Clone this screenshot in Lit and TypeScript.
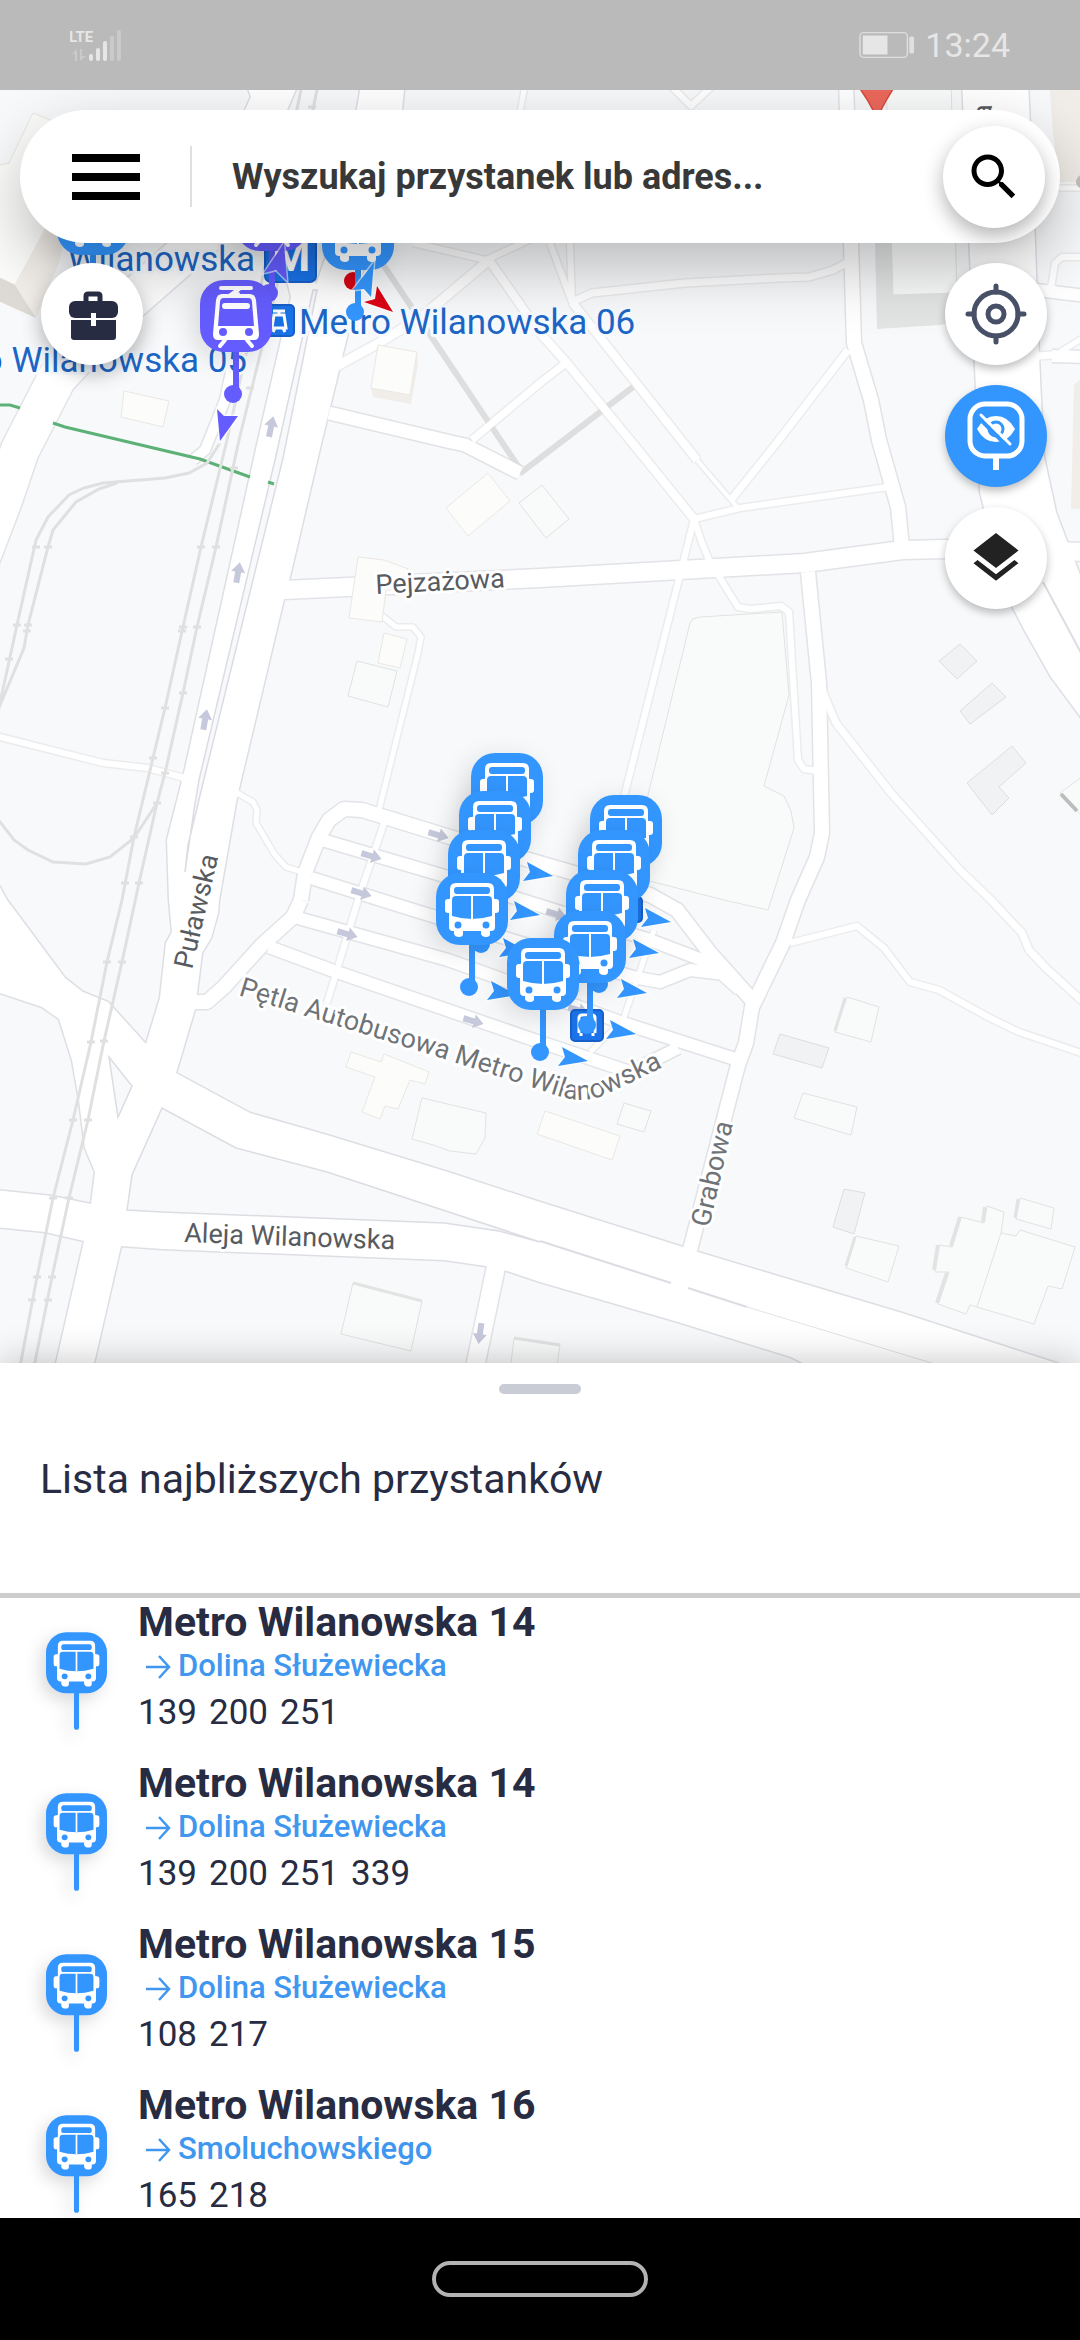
import { LitElement, html, svg, css } from "lit";
import { customElement, property } from "lit/decorators.js";

type Road = [string, number];
type Stop = { name: string; direction: string; lines: string[] };

const STOPS: Stop[] = [
  { name: "Metro Wilanowska 14", direction: "Dolina Służewiecka", lines: ["139", "200", "251"] },
  { name: "Metro Wilanowska 14", direction: "Dolina Służewiecka", lines: ["139", "200", "251", "339"] },
  { name: "Metro Wilanowska 15", direction: "Dolina Służewiecka", lines: ["108", "217"] },
  { name: "Metro Wilanowska 16", direction: "Smoluchowskiego", lines: ["165", "218"] },
];

// Wide streets with uneven edges, drawn as closed outlines.
const STREET_AREAS: string[] = [
  // Puławska with the junction and the diagonal avenue
  "M245,80 L251,97 245,110 270,180 286,277 291,297 258,440 184,773 167,840 169,900 172,932 166,943 160,998 146,1044 108,1002 83,992 65,978 7,900 -4,880 -4,991 0,993 42,1007 59,1019 72,1060 79,1100 85,1148 95,1172 91,1204 52,1196 -4,1190 -4,1227 45,1232 84,1241 54,1372 92,1372 121,1246 162,1249 444,1260 486,1266 504,1270 540,1282 678,1322 791,1357 820,1372 1082,1372 1053,1362 902,1313 698,1252 683,1247 540,1202 448,1172 327,1135 250,1113 176,1073 195,1009 197,993 202,953 211,938 218,913 219,900 237,797 284,599 289,581 322,440 339,370 402,110 405,80 362,80 335,230 316,285 300,200 287,110 300,80Z",
  // street along the east side
  "M962,80 L975,367 980,492 984,508 1000,580 1013,608 1026,633 1051,677 1086,724 1086,590 1068,544 1056,512 1044,457 1041,400 1038,333 1035,243 1028,80Z",
];

const ISLANDS: string[] = [
  "M109,1057 L132,1086 118,1117Z",
  "M127,1210 L132,1175 162,1108 236,1148 327,1172 540,1242 499,1231 444,1223 162,1212Z",
  "M275,460 L199,780 194,810 185,872 188,845 203,783 283,458 317,290 313,290Z",
];

const ROADS: Road[] = [
  ["M-20,560 L3,500 20,450 57,378 120,310 200,240 260,180", 38],
  ["M240,330 L225,400 205,450 193,460", 10],
  ["M283,590 L540,578 805,563 902,550 946,549 1090,552", 18],
  ["M846,80 L851,243 854,343 871,400 879,440 898,507 902,547", 14],
  ["M808,572 L819,683 822,833 817,857 798,900 783,943 752,1007 746,1043 738,1065 690,1250", 14],
  ["M329,413 L451,442 465,445 520,473", 13],
  ["M496,1267 L474,1372", 18],
  ["M1036,290 L1086,296", 12],
  ["M1051,288 L1055,263 1062,257 1086,257", 6],
  ["M1036,356 L1052,355", 7],
  ["M1052,356 L1086,357", 12],
  ["M1060,352 L1086,336", 5],
  ["M1056,188 L1086,188", 5],
  ["M671,86 L691,106 712,86", 6],
  ["M526,80 L520,112", 5],
  ["M550,243 L572,302 570,243", 6],
  ["M572,302 L592,293 685,283 778,278 809,277 833,270 848,262", 7],
  ["M572,302 L697,460", 8],
  ["M697,460 L731,500 740,510", 4],
  ["M413,243 L486,260 540,235", 6],
  ["M489,260 L540,333 566,362 630,440 694,519", 8],
  ["M489,260 L424,315 379,343 337,366", 9],
  ["M566,363 L540,383 472,440", 7],
  ["M848,350 L779,440 731,500", 7],
  ["M694,519 L740,508 888,487", 6],
  ["M694,519 L683,563 622,805 610,860", 6],
  ["M694,519 L702,543 710,562 738,607 750,609 781,606 789,612 798,760 804,769 817,771", 6],
  ["M822,690 L836,723 891,793 960,870 991,900 1022,933 1029,950 1046,968 1090,1008", 7],
  ["M790,943 L857,926 884,948 910,982 939,990 988,1017 1019,1032 1090,1056", 6],
  ["M362,600 L396,627 413,627 421,637 418,653 379,810", 5],
  ["M384,823 L358,900 327,1003", 6],
  ["M-4,736 L103,763 148,768 184,778", 6],
  ["M237,793 L253,802 257,810 256,823 275,855 286,867 305,873", 5],
  ["M654,930 L623,1020 590,1052", 5],
  ["M301,900 L305,873 319,837 329,820 344,809 362,810 453,838 650,895 677,910 690,927 710,953 752,1000", 14],
  ["M322,840 L448,877 650,940 710,963 740,990", 12],
  ["M311,878 L413,910 633,977 660,982 690,970 725,974", 12],
  ["M298,918 L448,960 560,1000 620,1022 738,1060", 12],
  ["M269,947 L331,970 540,1042 630,1072 678,1048", 12],
  ["M301,900 L293,917 262,945 224,987 207,1002 190,1002", 14],
];

const RAILS: string[] = [
  "M303,80 L260,290 227,440 201,547 183,627 165,708 153,758 134,837 122,900 107,962 91,1042 73,1120 53,1198 37,1277 19,1372",
  "M319,80 L276,290 239,440 216,547 197,627 183,693 165,773 157,803 139,883 122,962 104,1041 88,1120 69,1198 52,1277 33,1372",
  "M220,443 L207,463 189,473 165,478 103,483 84,488 69,495 48,517 36,540 17,625 -2,712",
  "M117,483 L99,489 76,502 53,530 48,547 28,625 24,648 -2,710",
  "M-3,818 L14,840 28,850 53,862 86,864 110,857 134,838 157,803",
];

const RAIL_TICKS: number[][] = [
  [201, 547], [216, 547], [183, 627], [182, 631], [197, 627], [165, 708], [183, 693], [153, 758], [165, 773],
  [134, 837], [157, 803], [125, 883], [139, 883], [107, 962], [122, 962], [91, 1042], [104, 1041], [73, 1120],
  [88, 1120], [53, 1198], [69, 1198], [37, 1277], [52, 1277], [32, 1300], [48, 1300], [36, 547], [48, 547],
  [17, 625], [28, 625], [27, 631], [9, 659], [312, 107], [250, 388], [234, 468],
];

// [outline, tone]
const BUILDINGS: [string, string][] = [
  ["M-4,166 L9,163 33,113 95,138 41,237 15,285 -4,276Z", "cream"],
  ["M41,237 L70,200 60,260 36,318 15,285Z", "face"],
  ["M-4,276 L15,285 36,318 -4,300Z", "side"],
  ["M371,388 L410,395 417,352 418,364 411,404 373,397Z", "face"],
  ["M378,345 L417,352 410,395 371,388Z", "cream"],
  ["M124,391 L169,401 163,427 121,417Z", "cream"],
  ["M488,473 L510,501 468,536 446,508Z", "cream"],
  ["M519,503 L542,485 569,519 546,538Z", "mint"],
  ["M358,557 L384,560 408,569 404,590 386,590 382,622 349,618Z", "cream"],
  ["M384,633 L407,639 400,668 378,663Z", "cream"],
  ["M357,661 L397,671 388,707 348,696Z", "mint"],
  ["M700,617 L782,612 789,695 764,786 784,796 791,811 794,828 768,910 724,900 630,876 648,795 690,623 693,619Z", "mint"],
  ["M960,644 L977,661 957,679 939,661Z", "gray"],
  ["M992,683 L1006,697 970,724 960,711Z", "gray"],
  ["M1012,746 L1026,763 999,787 1009,798 992,815 967,783Z", "gray"],
  ["M1060,793 L1086,774 1086,820Z", "mint"],
  ["M351,1052 L381,1062 384,1054 429,1072 425,1084 410,1080 398,1109 385,1106 380,1119 362,1112 375,1077 346,1067Z", "cream"],
  ["M422,1098 L486,1113 485,1138 476,1154 450,1151 433,1145 412,1139Z", "mint"],
  ["M353,1283 L422,1301 411,1351 341,1334Z", "mint"],
  ["M514,1338 L560,1345 556,1372 510,1372Z", "mint"],
  ["M545,1111 L620,1136 612,1160 537,1134Z", "cream"],
  ["M624,1103 L651,1111 644,1132 617,1124Z", "mint"],
  ["M847,997 L879,1007 871,1042 835,1032Z", "mint"],
  ["M780,1034 L829,1048 822,1068 773,1054Z", "gray"],
  ["M803,1093 L857,1107 851,1135 794,1118Z", "mint"],
  ["M844,1189 L865,1193 854,1234 833,1227Z", "gray"],
  ["M856,1236 L899,1246 888,1282 846,1268Z", "mint"],
  ["M1020,1198 L1054,1208 1051,1229 1016,1219Z", "mint"],
  ["M987,1206 L1004,1212 1001,1233 1016,1236 1020,1230 1075,1247 1062,1289 1048,1286 1034,1324 970,1305 966,1314 938,1304 949,1272 935,1272 939,1245 952,1247 961,1217 984,1223Z", "mint"],
  ["M1001,1233 L977,1307", "mint"],
  ["M1049,80 L1086,80 1086,182 1059,182 1053,133Z", "face"],
  ["M1086,374 L1074,385 1071,509 1086,509Z", "face"],
  ["M874,200 L891,200 893,295 950,293 950,322 941,325 877,329Z", "shade"],
  ["M886,80 L951,80 957,293 893,295Z", "mint"],
];

const WALLS: Road[] = [
  ["M353,1283 L422,1301", 3],
  ["M514,1338 L560,1345", 3],
  ["M845,998 L835,1031", 3],
  ["M855,1237 L846,1266", 3],
  ["M1018,1199 L1015,1218", 3],
  ["M985,1207 L983,1222", 4],
  ["M960,1217 L951,1246", 4],
  ["M938,1245 L934,1270", 4],
  ["M947,1273 L937,1303", 4],
];

// x, y, rotation
const FLOW_ARROWS: number[][] = [
  [271, 427, -78], [238, 573, -80], [205, 720, -80], [438, 835, 16], [371, 856, 16], [361, 893, 16],
  [347, 934, 16], [473, 1021, 16], [556, 914, 16], [578, 1010, 16], [480, 1333, 98],
];

const BUS_MARKERS: number[][] = [
  [471, 753], [459, 791], [448, 830], [436, 873], [590, 795], [578, 830], [566, 870], [554, 911], [507, 938],
];

const HEADINGS: number[][] = [
  [553, 876], [540, 915], [529, 952], [517, 995], [588, 1061], [671, 922], [659, 953], [647, 993], [636, 1034],
];

const busGlyph = svg`
  <rect x="0" y="0" width="72" height="72" rx="24" fill="#3396ff"></rect>
  <rect x="9" y="26" width="54" height="14" rx="3" fill="#fff"></rect>
  <path d="M20,10 H52 Q58,10 58,16 V25 L59,28 V54 Q59,58 55,58 H54 V61 Q54,64 50,64 T45,61 V58 H27 V61 Q27,64 23,64 T18,61 V58 H17 Q13,58 13,54 V28 L14,25 V16 Q14,10 20,10Z" fill="#fff"></path>
  <rect x="18" y="14" width="36" height="7" rx="3" fill="#3396ff"></rect>
  <path d="M20,23 H52 Q56,23 56,27 V43 Q46,46 36,46 T16,43 V27 Q16,23 20,23Z" fill="#3396ff"></path>
  <path d="M36,22 V46" stroke="#fff" stroke-width="2"></path>
  <circle cx="22" cy="52" r="3.5" fill="#3396ff"></circle>
  <circle cx="50" cy="52" r="3.5" fill="#3396ff"></circle>`;

const tramGlyph = svg`
  <rect x="0" y="0" width="72" height="72" rx="24" fill="#655cff"></rect>
  <path d="M21,8 H51 M39,9 L32,14 H38" fill="none" stroke="#fff" stroke-width="4" stroke-linecap="round"></path>
  <path d="M22,14 H50 Q55,14 56,20 L59,54 Q59,60 54,60 H18 Q13,60 13,54 L16,20 Q17,14 22,14Z" fill="#fff"></path>
  <path d="M24,18 H48 Q52,18 52,22 L54,46 H18 L20,22 Q20,18 24,18Z" fill="#655cff"></path>
  <rect x="22" y="23" width="28" height="6" rx="3" fill="#fff"></rect>
  <circle cx="23" cy="52" r="4" fill="#655cff"></circle>
  <circle cx="49" cy="52" r="4" fill="#655cff"></circle>
  <path d="M25,60 L20,66 M47,60 L52,66" stroke="#fff" stroke-width="4" stroke-linecap="round"></path>`;

const mapMarker = (x: number, y: number, tram = false) => svg`
  <g class="marker" transform="translate(${x} ${y})">
    <path d="M36,70 V112" stroke=${tram ? "#655cff" : "#3396ff"} stroke-width="6"></path>
    <circle cx="33" cy="114" r="9" fill=${tram ? "#655cff" : "#3396ff"}></circle>
    <g class="sign">${tram ? tramGlyph : busGlyph}</g>
  </g>`;

@customElement("stop-map")
export class StopMap extends LitElement {
  static styles = css`
    :host {
      display: block;
      background: #f7f9fb;
    }
    .canvas {
      display: block;
      width: 100%;
      height: 100%;
    }
    .casing {
      fill: none;
      stroke: #e2e3e7;
      stroke-linejoin: round;
    }
    .casing-light {
      fill: none;
      stroke: #ebecee;
      stroke-linejoin: round;
    }
    .surface {
      fill: none;
      stroke: #fff;
      stroke-linejoin: round;
    }
    .area {
      fill: #fff;
      stroke: #dedfe4;
      stroke-width: 3;
    }
    .area-fill {
      fill: #fff;
    }
    .island {
      fill: #f7f9fb;
      stroke: #dcdde3;
      stroke-width: 1.5;
    }
    .median {
      fill: none;
      stroke: #dcdde3;
      stroke-width: 2;
    }
    .rail {
      fill: none;
      stroke: #e0e0e1;
      stroke-width: 3;
    }
    .lane {
      fill: none;
      stroke: #dedede;
      stroke-width: 6;
    }
    .green {
      fill: none;
      stroke: #5db176;
      stroke-width: 3;
    }
    .cream {
      fill: #fcfcfa;
      stroke: #ebe8e3;
    }
    .mint {
      fill: #f9fbfa;
      stroke: #e0e3e1;
    }
    .gray {
      fill: #f1f2f4;
      stroke: #dddee0;
    }
    .face {
      fill: #f1ede9;
    }
    .side {
      fill: #dedad6;
    }
    .shade {
      fill: #e3e5e4;
    }
    .wall {
      fill: none;
      stroke: #e2e3e2;
    }
    .flow {
      fill: #c6c9db;
    }
    .label {
      font-family: Roboto, "Noto Sans", sans-serif;
      font-size: 27px;
      fill: #575b60;
      stroke: #fff;
      stroke-width: 6;
      stroke-linejoin: round;
      paint-order: stroke;
    }
    .minor {
      fill: #6f7377;
    }
    .transit {
      font-size: 35px;
      fill: #1d66c6;
      stroke: #f7fbff;
    }
    .badge {
      fill: #1a73e8;
      stroke: #175fc9;
      stroke-width: 2;
    }
    .badge-letter {
      font-family: Roboto, sans-serif;
      font-size: 44px;
      font-weight: 700;
      fill: #fff;
    }
    .heading {
      stroke: rgba(255, 255, 255, 0.6);
      stroke-width: 3;
      paint-order: stroke;
    }
    .blue {
      fill: #3396ff;
    }
    .purple {
      fill: #655cff;
    }
    .red {
      fill: #dc0414;
    }
    .sign {
      filter: drop-shadow(-6px 6px 12px rgba(0, 0, 0, 0.12));
    }
  `;

  render() {
    return html`
      <svg class="canvas" viewBox="0 90 1080 1273" preserveAspectRatio="xMidYMin slice" role="img" aria-label="Mapa przystanków">
        ${STREET_AREAS.map((d) => svg`<path class="area" d=${d}></path>`)}
        ${ROADS.map(
          ([d, w]) => svg`<path class=${w < 10 ? "casing-light" : "casing"} d=${d} stroke-width=${w + 3}></path>`
        )}
        ${STREET_AREAS.map((d) => svg`<path class="area-fill" d=${d}></path>`)}
        ${ISLANDS.map((d) => svg`<path class="island" d=${d}></path>`)}
        <path class="lane" d="M382,263 L522,472 L633,387"></path>
        ${ROADS.map(([d, w]) => svg`<path class="surface" d=${d} stroke-width=${w}></path>`)}
        <path class="median" d="M540,1241 L671,1283 M688,1288 L747,1307 M1043,582 L1086,662"></path>
        <path class="casing" d="M747,1307 L935,1364"></path>
        ${BUILDINGS.map(([d, tone]) => svg`<path class=${tone} d=${d}></path>`)}
        ${WALLS.map(([d, w]) => svg`<path class="wall" d=${d} stroke-width=${w}></path>`)}
        <path d="M1061,794 L1077,811" stroke="#bcbebd" stroke-width="4"></path>
        <path d="M1086,172 Q1076,176 1076,182 T1086,190Z" fill="#c4c1be"></path>
        <path class="green" d="M-2,405 L10,405 20,408 M53,423 L65,427 200,459 250,477 M268,482 L274,484"></path>
        ${RAILS.map((d) => svg`<path class="rail" d=${d}></path>`)}
        ${RAIL_TICKS.map(([x, y]) => svg`<path class="rail" d="M${x - 4},${y} h8"></path>`)}
        ${FLOW_ARROWS.map(
          ([x, y, r]) => svg`<path class="flow" transform="translate(${x} ${y}) rotate(${r})" d="M-10,-3 H1 V-7 L11,0 L1,7 V3 H-10Z"></path>`
        )}
        <path d="M858,86 L895,86 Q887,98 880,112 H874 Q867,98 858,86Z" fill="#ec685c" stroke="#d84a3e" stroke-width="1.5"></path>

        <path id="loop" fill="none" d="M238,995 L441,1058 L562,1097 Q583,1103 603,1096 L690,1054"></path>
        <text class="label minor"><textPath href="#loop">Pętla Autobusowa Metro Wilanowska</textPath></text>
        <text class="label" transform="translate(376 594) rotate(-3)">Pejzażowa</text>
        <text class="label" transform="translate(184 1242) rotate(2)">Aleja Wilanowska</text>
        <text class="label" transform="translate(192 970) rotate(-77)">Puławska</text>
        <text class="label minor" transform="translate(709 1228) rotate(-77)">Grabowa</text>
        <text class="label" transform="translate(992 119) rotate(-90)">a</text>

        <text class="label transit" x="255" y="271" text-anchor="end">Wilanowska</text>
        <text class="label transit" x="247" y="372" text-anchor="end">Metro Wilanowska 05</text>
        <text class="label transit" x="299" y="334">Metro Wilanowska 06</text>
        <rect class="badge" x="265" y="230" width="51" height="52" rx="6"></rect>
        <text class="badge-letter" x="291" y="271" text-anchor="middle">M</text>
        <rect class="badge" x="262" y="305" width="32" height="31" rx="4"></rect>
        <path d="M273,311 h12 M279,311 v3 M274,315 h10 l2,13 h-14z M275,328 l-2,4 M283,328 l2,4" fill="none" stroke="#fff" stroke-width="3"></path>
        <rect class="badge" x="625" y="897" width="17" height="25" rx="4"></rect>
        <rect class="badge" x="571" y="1010" width="32" height="31" rx="4"></rect>
        <path d="M579,1033 V1018 Q579,1015 582,1015 H592 Q595,1015 595,1018 V1033 M581,1033 v3 M593,1033 v3" fill="none" stroke="#fff" stroke-width="3"></path>

        ${mapMarker(57, 183)} ${mapMarker(236, 179, true)}
        <path class="heading purple" d="M284,243 L264,273 L276,270 L287,281Z"></path>
        ${mapMarker(200, 280, true)}
        <path class="heading purple" d="M217,409 L224,416 L238,416 L220,441Z"></path>
        <circle class="red" cx="353" cy="281" r="9"></circle>
        <path class="heading red" d="M393,312 L377,286 L375,299 L364,302Z"></path>
        ${mapMarker(322, 198)}
        <path class="heading blue" d="M374,262 L353,290 L364,289 L371,297Z"></path>

        ${HEADINGS.map(
          ([x, y]) => svg`<path class="heading blue" transform="translate(${x} ${y})" d="M0,0 L-26,-14 L-23,-4 L-30,5Z"></path>`
        )}
        ${BUS_MARKERS.map(([x, y]) => mapMarker(x, y))}
      </svg>
    `;
  }
}

@customElement("stop-row")
export class StopRow extends LitElement {
  @property({ attribute: false }) stop!: Stop;

  static styles = css`
    :host {
      display: flex;
      align-items: flex-start;
      gap: 31px;
      padding: 0 46px;
    }
    .pin {
      flex: none;
      width: 61px;
      height: 98px;
      margin-top: 34px;
      overflow: visible;
      filter: drop-shadow(-5px 6px 8px rgba(0, 0, 0, 0.14));
    }
    .name {
      margin: 0;
      font-size: 41px;
      line-height: 48px;
      font-weight: 700;
    }
    .direction {
      display: flex;
      align-items: center;
      gap: 6px;
      margin: 0;
      padding-left: 6px;
      font-size: 31px;
      line-height: 40px;
      font-weight: 500;
      color: #3f97f0;
    }
    .lines {
      display: flex;
      gap: 12px;
      margin: 0;
      padding-top: 5px;
      font-size: 35px;
      line-height: 44px;
    }
  `;

  render() {
    return html`
      <svg class="pin" viewBox="0 0 72 115" aria-hidden="true">
        <path d="M36,70 V112" stroke="#3396ff" stroke-width="6" stroke-linecap="round"></path>
        ${busGlyph}
      </svg>
      <div>
        <h3 class="name">${this.stop.name}</h3>
        <p class="direction">
          <svg width="28" height="28" viewBox="0 0 28 28" aria-hidden="true">
            <path d="M2,15 H25 M15,4 L25,15 L15,26" fill="none" stroke="#3f97f0" stroke-width="2.5"></path>
          </svg>
          <span>${this.stop.direction}</span>
        </p>
        <p class="lines">${this.stop.lines.map((line) => html`<span>${line}</span>`)}</p>
      </div>
    `;
  }
}

@customElement("app-root")
export class AppRoot extends LitElement {
  static styles = css`
    :host {
      display: flex;
      flex-direction: column;
      min-height: 100vh;
      font-family: Roboto, "Noto Sans", sans-serif;
      color: #282c42;
      background: #fff;
    }
    button {
      padding: 0;
      border: 0;
      background: none;
      cursor: pointer;
    }
    .status {
      display: flex;
      align-items: center;
      justify-content: space-between;
      height: 90px;
      padding: 0 70px;
      box-sizing: border-box;
      background: #bababa;
      color: #e6e6e6;
    }
    .status-right {
      display: flex;
      align-items: center;
      gap: 10px;
      font-size: 34px;
      line-height: 40px;
    }
    .lte {
      font-size: 15px;
      font-weight: 700;
      fill: #e6e6e6;
    }
    .map {
      position: relative;
      flex: 1;
      min-height: 640px;
      overflow: hidden;
    }
    .canvas {
      position: absolute;
      inset: 0;
    }
    .overlay {
      position: relative;
      display: flex;
      flex-direction: column;
      gap: 20px;
      padding: 20px;
    }
    .search {
      display: flex;
      align-items: center;
      height: 133px;
      padding: 0 15px 0 52px;
      box-sizing: border-box;
      border-radius: 67px;
      background: #fff;
      box-shadow: 0 24px 64px rgba(0, 0, 0, 0.26);
    }
    .menu {
      display: flex;
    }
    .rule {
      width: 2px;
      height: 61px;
      margin: 0 40px 0 50px;
      background: #e0e0e0;
    }
    .field {
      flex: 1;
      min-width: 0;
      padding: 0;
      border: 0;
      outline: 0;
      background: none;
      font: 700 36px/48px Roboto, "Noto Sans", sans-serif;
      color: #383838;
    }
    .field::placeholder {
      color: #383838;
      opacity: 1;
    }
    .round {
      display: flex;
      align-items: center;
      justify-content: center;
      flex: none;
      width: 102px;
      height: 102px;
      border-radius: 50%;
      background: #fff;
      box-shadow: 0 4px 8px rgba(0, 0, 0, 0.26);
    }
    .raised {
      box-shadow: 0 8px 20px rgba(0, 0, 0, 0.3);
    }
    .active {
      background: #3396ff;
    }
    .tools {
      display: flex;
      align-items: flex-start;
      justify-content: space-between;
      padding: 0 13px 0 21px;
    }
    .stack {
      display: flex;
      flex-direction: column;
      gap: 20px;
    }
    .sheet {
      position: relative;
      background: #fff;
      box-shadow: 0 0 36px rgba(0, 0, 0, 0.24);
    }
    .grip {
      display: block;
      width: 82px;
      height: 31px;
      margin: 0 auto;
      padding-top: 21px;
      box-sizing: border-box;
    }
    .grip-bar {
      display: block;
      height: 10px;
      border-radius: 5px;
      background: #c9ccd4;
    }
    .title {
      margin: 0;
      padding: 61px 40px 90px;
      font-size: 41px;
      line-height: 48px;
      font-weight: 400;
      border-bottom: 5px solid #cdcdcd;
    }
    .list {
      display: flex;
      flex-direction: column;
      gap: 24px;
      margin: 0;
      padding: 0;
      list-style: none;
    }
    .nav {
      position: relative;
      display: flex;
      align-items: center;
      justify-content: center;
      height: 122px;
      background: #000;
    }
    .home {
      width: 216px;
      height: 36px;
      border: 4px solid #b3b3b3;
      border-radius: 18px;
    }
  `;

  render() {
    return html`
      <header class="status">
        <svg width="54" height="34" viewBox="0 0 54 34" role="img" aria-label="Sygnał LTE">
          <text class="lte" x="-1" y="14">LTE</text>
          <g fill="#e6e6e6">
            <rect x="19" y="26" width="4" height="7" rx="2"></rect>
            <rect x="26" y="20" width="4" height="13" rx="2"></rect>
            <rect x="33" y="13" width="4" height="20" rx="2"></rect>
          </g>
          <g fill="#cacaca">
            <rect x="40" y="8" width="4" height="25" rx="2"></rect>
            <rect x="47" y="2" width="4" height="31" rx="2"></rect>
            <path d="M2,26 L7,21 V33 H5 V26Z M10,21 H12 V28 H16 L10,33Z"></path>
          </g>
        </svg>
        <div class="status-right">
          <svg width="56" height="30" viewBox="0 0 59 30" role="img" aria-label="Bateria">
            <rect x="1" y="2" width="50" height="26" rx="4" fill="none" stroke="#dedede" stroke-width="1.5"></rect>
            <rect x="4" y="5" width="26" height="20" fill="#e6e6e6"></rect>
            <rect x="53" y="6" width="5" height="18" rx="2" fill="#e0e0e0"></rect>
          </svg>
          <time>13:24</time>
        </div>
      </header>

      <main class="map">
        <stop-map class="canvas"></stop-map>
        <div class="overlay">
          <div class="search">
            <button class="menu" aria-label="Menu">
              <svg width="68" height="46" viewBox="0 0 68 46" aria-hidden="true">
                <path d="M0,4 H68 M0,23 H68 M0,42 H68" stroke="#000" stroke-width="8"></path>
              </svg>
            </button>
            <span class="rule"></span>
            <input class="field" type="text" aria-label="Wyszukaj przystanek lub adres" placeholder="Wyszukaj przystanek lub adres..." />
            <button class="round raised" aria-label="Szukaj">
              <svg width="60" height="60" viewBox="0 0 24 24" aria-hidden="true">
                <path d="M15.5 14h-.79l-.28-.27C15.41 12.59 16 11.11 16 9.5 16 5.91 13.09 3 9.5 3S3 5.91 3 9.5 5.91 16 9.5 16c1.61 0 3.09-.59 4.23-1.57l.27.28v.79l5 4.99L20.49 19l-4.99-5zm-6 0C7.01 14 5 11.99 5 9.5S7.01 5 9.5 5 14 7.01 14 9.5 11.99 14 9.5 14z"></path>
              </svg>
            </button>
          </div>
          <div class="tools">
            <button class="round raised" aria-label="Moje miejsca">
              <svg width="102" height="102" viewBox="0 0 102 102" aria-hidden="true">
                <path d="M45,42 V33 Q45,31 47,31 H57 Q59,31 59,33 V42" fill="none" stroke="#282c42" stroke-width="5"></path>
                <rect x="28" y="38" width="49" height="17" rx="6" fill="#282c42"></rect>
                <path d="M30,57 H75 V74 Q75,77 72,77 H33 Q30,77 30,74Z" fill="#282c42"></path>
                <rect x="50" y="50" width="5" height="13" fill="#fff"></rect>
              </svg>
            </button>
            <div class="stack">
              <button class="round" aria-label="Moja lokalizacja">
                <svg width="102" height="102" viewBox="0 0 102 102" fill="none" stroke="#475066" stroke-width="5" stroke-linecap="round" aria-hidden="true">
                  <circle cx="51" cy="51" r="22"></circle>
                  <circle cx="51" cy="51" r="8"></circle>
                  <path d="M51,23 V29 M51,73 V79 M23,51 H29 M73,51 H79"></path>
                </svg>
              </button>
              <button class="round active" aria-label="Ukryj przystanki">
                <svg width="102" height="102" viewBox="0 0 102 102" aria-hidden="true">
                  <rect x="25" y="19" width="52" height="52" rx="15" fill="none" stroke="#fff" stroke-width="5"></rect>
                  <path d="M51,72 V85" stroke="#fff" stroke-width="6"></path>
                  <path d="M32,44 Q39,31 51,31 T70,44 Q63,57 51,57 T32,44Z" fill="#fff"></path>
                  <circle cx="51" cy="44" r="7" fill="none" stroke="#3396ff" stroke-width="3"></circle>
                  <path d="M32,31 L62,61" stroke="#3396ff" stroke-width="4"></path>
                  <path d="M36,30 L65,59" stroke="#fff" stroke-width="3" stroke-linecap="round"></path>
                </svg>
              </button>
              <button class="round" aria-label="Warstwy">
                <svg width="60" height="60" viewBox="0 0 24 24" aria-hidden="true">
                  <path fill="#222" d="M11.99 18.54l-7.37-5.73L3 14.07l9 7 9-7-1.63-1.27-7.38 5.74zM12 16l7.36-5.73L21 9l-9-7-9 7 1.63 1.27L12 16z"></path>
                </svg>
              </button>
            </div>
          </div>
        </div>
      </main>

      <section class="sheet">
        <button class="grip" aria-label="Rozwiń listę"><span class="grip-bar"></span></button>
        <h2 class="title">Lista najbliższych przystanków</h2>
        <ul class="list">
          ${STOPS.map((stop) => html`<li><stop-row .stop=${stop}></stop-row></li>`)}
        </ul>
      </section>

      <nav class="nav"><button class="home" aria-label="Ekran główny"></button></nav>
    `;
  }
}
